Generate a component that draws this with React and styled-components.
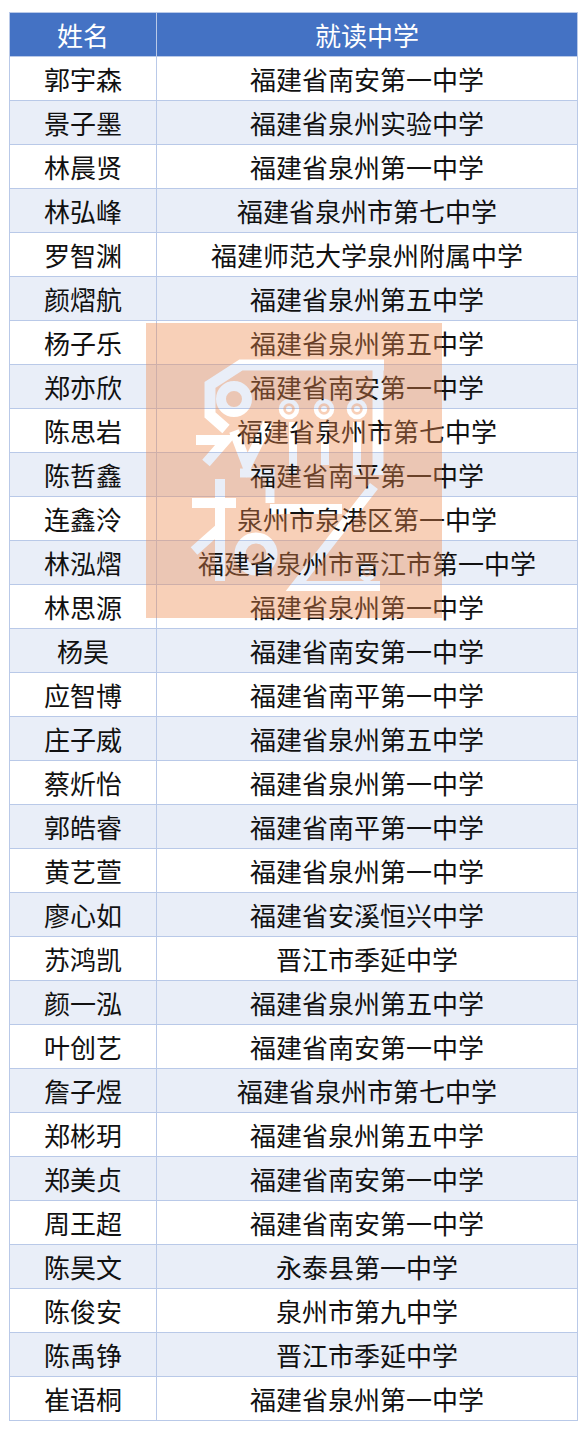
import styled, { createGlobalStyle } from "styled-components"

const GlobalStyle = createGlobalStyle`
  html, body {
    margin: 0;
    padding: 0;
    background: #ffffff;
  }
`

const students = [
  ["郭宇森", "福建省南安第一中学"],
  ["景子墨", "福建省泉州实验中学"],
  ["林晨贤", "福建省泉州第一中学"],
  ["林弘峰", "福建省泉州市第七中学"],
  ["罗智渊", "福建师范大学泉州附属中学"],
  ["颜熠航", "福建省泉州第五中学"],
  ["杨子乐", "福建省泉州第五中学"],
  ["郑亦欣", "福建省南安第一中学"],
  ["陈思岩", "福建省泉州市第七中学"],
  ["陈哲鑫", "福建省南平第一中学"],
  ["连鑫泠", "泉州市泉港区第一中学"],
  ["林泓熠", "福建省泉州市晋江市第一中学"],
  ["林思源", "福建省泉州第一中学"],
  ["杨昊", "福建省南安第一中学"],
  ["应智博", "福建省南平第一中学"],
  ["庄子威", "福建省泉州第五中学"],
  ["蔡炘怡", "福建省泉州第一中学"],
  ["郭皓睿", "福建省南平第一中学"],
  ["黄艺萱", "福建省泉州第一中学"],
  ["廖心如", "福建省安溪恒兴中学"],
  ["苏鸿凯", "晋江市季延中学"],
  ["颜一泓", "福建省泉州第五中学"],
  ["叶创艺", "福建省南安第一中学"],
  ["詹子煜", "福建省泉州市第七中学"],
  ["郑彬玥", "福建省泉州第五中学"],
  ["郑美贞", "福建省南安第一中学"],
  ["周王超", "福建省南安第一中学"],
  ["陈昊文", "永泰县第一中学"],
  ["陈俊安", "泉州市第九中学"],
  ["陈禹铮", "晋江市季延中学"],
  ["崔语桐", "福建省泉州第一中学"],
]

const Page = styled.div`
  position: relative;
  padding: 12px 7px 0 9px;
  font-family: "Noto Sans CJK SC", "Noto Sans", sans-serif;
`

const Table = styled.div`
  border-top: 1px solid #b9c9e8;
  border-left: 1px solid #b9c9e8;
`

const Row = styled.div`
  display: grid;
  grid-template-columns: 147px 1fr;
  height: 44px;
  background: ${(p) => (p.$head ? "#4472c4" : p.$band ? "#e9eef8" : "#ffffff")};
`

const Cell = styled.div`
  box-sizing: border-box;
  display: flex;
  align-items: center;
  justify-content: center;
  border-right: 1px solid #b9c9e8;
  border-bottom: 1px solid #b9c9e8;
  font-size: 26px;
  line-height: 1;
  color: ${(p) => (p.$head ? "#ffffff" : "#111111")};
  white-space: nowrap;
`

// stamp laid over the middle of the table; the logo is cut out of the tint
const Watermark = styled.div`
  position: absolute;
  left: 146px;
  top: 323px;
  width: 296px;
  height: 295px;
  pointer-events: none;

  svg {
    display: block;
  }
`

const WatermarkStamp = () => (
  <svg width="296" height="295" viewBox="0 0 296 295">
    <defs>
      <mask id="logo-cut">
        <rect width="296" height="295" fill="#fff" />
        <g fill="none" stroke="#000" strokeLinejoin="miter">
          <path d="M238 42 H95 L64 62 V92 L80 106" strokeWidth="11" />
          <circle cx="88" cy="76" r="13" strokeWidth="10" />
          <circle cx="143" cy="86" r="8" strokeWidth="4.5" />
          <circle cx="178" cy="86" r="8" strokeWidth="4.5" />
          <circle cx="211" cy="86" r="8" strokeWidth="4.5" />
          <path d="M232 42 V152" strokeWidth="11" />
          <path d="M147 99 V152 M179 99 V142 M211 99 V152" strokeWidth="8" />
          <path d="M50 117 H80 L60 140" strokeWidth="10" />
          <path d="M88 108 L101 142 L122 100" strokeWidth="10" />
          <path d="M46 180 H90 M74 156 V258 M74 205 L48 228" strokeWidth="10" />
          <path d="M94 150 H124 V180" strokeWidth="9" />
          <circle cx="110" cy="231" r="16" strokeWidth="11" />
          <path d="M124 186 H196 M228 163 L150 263 H234" strokeWidth="10" />
          <circle cx="221" cy="249" r="7" strokeWidth="4.5" />
        </g>
        <g fill="#000">
          <circle cx="143" cy="86" r="3" />
          <circle cx="178" cy="86" r="3" />
          <circle cx="211" cy="86" r="3" />
          <circle cx="221" cy="249" r="2.5" />
        </g>
      </mask>
    </defs>
    <rect width="296" height="295" fill="rgba(238, 138, 78, 0.4)" mask="url(#logo-cut)" />
  </svg>
)

export default function App() {
  return (
    <>
      <GlobalStyle />
      <Page>
        <Table>
          <Row $head>
            <Cell $head>姓名</Cell>
            <Cell $head>就读中学</Cell>
          </Row>
          {students.map(([name, school], i) => (
            <Row key={name} $band={i % 2 === 1}>
              <Cell>{name}</Cell>
              <Cell>{school}</Cell>
            </Row>
          ))}
        </Table>
        <Watermark>
          <WatermarkStamp />
        </Watermark>
      </Page>
    </>
  )
}
